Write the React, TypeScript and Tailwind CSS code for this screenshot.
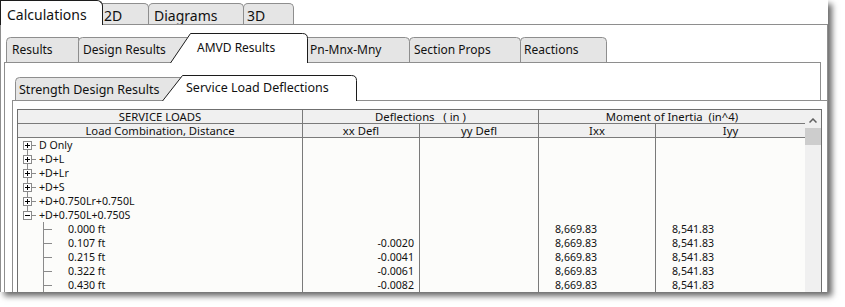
import React from "react";

// Forme d'onglet dessinée en SVG (fond + contour)
function TabShape({ d, active }: { d: string; active?: boolean }) {
  return (
    <svg className="absolute inset-0 overflow-visible" width="100%" height="100%">
      <path
        d={d}
        fill={active ? "#ffffff" : "#e5e5e5"}
        stroke={active ? "#1c1c1c" : "#8e8e8e"}
        strokeWidth="1"
      />
    </svg>
  );
}

// Noeud parent de l'arbre (+ / -)
function ParentNode({ first, last, open }: { first?: boolean; last?: boolean; open?: boolean }) {
  return (
    <svg width="21" height="14" className="shrink-0">
      <line x1="9.5" y1={first ? 7 : 0} x2="9.5" y2={last ? 7 : 14} stroke="#8a8a8a" />
      <line x1="14" y1="7.5" x2="18" y2="7.5" stroke="#8a8a8a" />
      <rect x="5.5" y="3.5" width="8" height="8" fill="#ffffff" stroke="#8a8a8a" />
      <line x1="7" y1="7.5" x2="12" y2="7.5" stroke="#000000" />
      {!open && <line x1="9.5" y1="5" x2="9.5" y2="10" stroke="#000000" />}
    </svg>
  );
}

function ChildNode() {
  return (
    <svg width="50" height="14" className="shrink-0">
      <line x1="25.5" y1="0" x2="25.5" y2="14" stroke="#8a8a8a" />
      <line x1="26" y1="7.5" x2="34" y2="7.5" stroke="#8a8a8a" />
    </svg>
  );
}

const parents = ["D Only", "+D+L", "+D+Lr", "+D+S", "+D+0.750Lr+0.750L", "+D+0.750L+0.750S"];

const stations = [
  { dist: "0.000 ft", xx: "", ixx: "8,669.83", iyy: "8,541.83" },
  { dist: "0.107 ft", xx: "-0.0020", ixx: "8,669.83", iyy: "8,541.83" },
  { dist: "0.215 ft", xx: "-0.0041", ixx: "8,669.83", iyy: "8,541.83" },
  { dist: "0.322 ft", xx: "-0.0061", ixx: "8,669.83", iyy: "8,541.83" },
  { dist: "0.430 ft", xx: "-0.0082", ixx: "8,669.83", iyy: "8,541.83" },
];

function Row({ label, xx = "", ixx = "", iyy = "" }: { label: React.ReactNode; xx?: string; ixx?: string; iyy?: string }) {
  return (
    <div className="flex h-[14px] leading-[14px] text-[10.6px]">
      <div className="w-[285px] border-r border-[#7a7a7a] flex items-center">{label}</div>
      <div className="w-[117px] border-r border-[#7a7a7a] text-right pr-[5px]">{xx}</div>
      <div className="w-[119px] border-r border-[#7a7a7a]" />
      <div className="w-[117px] border-r border-[#7a7a7a] pl-[16px]">{ixx}</div>
      <div className="w-[149px] pl-[16px]">{iyy}</div>
    </div>
  );
}

export default function App() {
  return (
    <div className="w-[845px] h-[307px] bg-white overflow-hidden font-['Noto_Sans','Open_Sans',sans-serif] text-[#111111]">
      <div className="flex flex-col w-[828px] h-[292px] bg-white overflow-hidden shadow-[4px_4px_6px_rgba(0,0,0,0.6)]">
        {/* Onglets niveau 1 */}
        <div className="flex items-end h-[24px] text-[14px] shrink-0">
          <div className="relative z-10 -mb-px h-[25px] w-[103px] bg-white border border-b-0 border-[#1c1c1c] rounded-tr-[6px] pl-[6px] leading-[27px]">
            Calculations
          </div>
          <div className="-ml-px h-[21px] w-[47px] bg-[#e5e5e5] border border-b-0 border-[#8e8e8e] rounded-tr-[5px] pl-[1px] leading-[24px]">
            2D
          </div>
          <div className="-ml-px h-[21px] w-[96px] bg-[#e5e5e5] border border-b-0 border-[#8e8e8e] rounded-t-[5px] pl-[5px] leading-[24px]">
            Diagrams
          </div>
          <div className="-ml-px h-[21px] w-[51px] bg-[#e5e5e5] border border-b-0 border-[#8e8e8e] rounded-t-[5px] pl-[3px] leading-[24px]">
            3D
          </div>
        </div>

        {/* Panneau niveau 1 */}
        <div className="flex-1 flex flex-col border-t border-l border-r border-[#8e8e8e] pt-[8px] pl-[3px] pr-[6px]">
          {/* Onglets niveau 2 */}
          <div className="flex items-end h-[29px] pl-[2px] text-[12px] shrink-0">
            <div className="relative w-[73px] h-[25px] flex items-center pl-[6px]">
              <TabShape d="M0.5 25V4.5Q0.5 0.5 4.5 0.5H72.5V25" />
              <span className="relative">Results</span>
            </div>
            <div className="relative -ml-px w-[114px] h-[25px] flex items-center pl-[5px]">
              <TabShape d="M0.5 25V4.5Q0.5 0.5 4.5 0.5H109.5Q113.5 0.5 113.5 4.5V25" />
              <span className="relative">Design Results</span>
            </div>
            <div className="relative z-20 -mb-px -ml-[22px] w-[138px] h-[30px] flex items-center pl-[27px] pb-[1px]">
              <TabShape active d="M0.5 30L20.5 0.5H132.5Q137.5 0.5 137.5 5.5V30" />
              <span className="relative">AMVD Results</span>
            </div>
            <div className="relative z-10 -ml-px w-[103px] h-[25px] flex items-center pl-[3px]">
              <TabShape d="M0.5 25V0.5H98.5Q102.5 0.5 102.5 4.5V25" />
              <span className="relative">Pn-Mnx-Mny</span>
            </div>
            <div className="relative -ml-px w-[112px] h-[25px] flex items-center pl-[5px]">
              <TabShape d="M0.5 25V4.5Q0.5 0.5 4.5 0.5H107.5Q111.5 0.5 111.5 4.5V25" />
              <span className="relative">Section Props</span>
            </div>
            <div className="relative -ml-px w-[87px] h-[25px] flex items-center pl-[4px]">
              <TabShape d="M0.5 25V4.5Q0.5 0.5 4.5 0.5H82.5Q86.5 0.5 86.5 4.5V25" />
              <span className="relative">Reactions</span>
            </div>
          </div>

          {/* Panneau niveau 2 */}
          <div className="flex-1 flex flex-col border-t border-l border-r border-[#8e8e8e] pl-[7px] pt-[12px]">
            <div className="relative z-10 flex-1 flex flex-col -mr-[7px]">
              {/* Onglets niveau 3 */}
              <div className="flex items-end h-[25px] pl-[3px] text-[12.5px] shrink-0">
                <div className="relative w-[172px] h-[23px] flex items-center pl-[4px] pt-[3px]">
                  <TabShape d="M0.5 23V4.5Q0.5 0.5 4.5 0.5H167.5Q171.5 0.5 171.5 4.5V23" />
                  <span className="relative">Strength Design Results</span>
                </div>
                <div className="relative z-20 -mb-px -ml-[25px] w-[195px] h-[26px] flex items-center pl-[24px]">
                  <TabShape active d="M0.5 26L20.5 0.5H189.5Q194.5 0.5 194.5 5.5V26" />
                  <span className="relative">Service Load Deflections</span>
                </div>
              </div>

              {/* Panneau niveau 3 */}
              <div className="flex-1 bg-white border-t border-l border-[#8e8e8e] pt-[8px] pl-[4px]">
                {/* Grille */}
                <div className="flex w-[805px] border border-[#6f6f6f] bg-[#fcfcfa]">
                  <div className="w-[787px] flex flex-col">
                    <div className="flex h-[14px] bg-[#f0f0f0] text-[11.3px] leading-[13px] text-center">
                      <div className="w-[285px] border-r border-b border-[#7a7a7a]">SERVICE LOADS</div>
                      <div className="w-[236px] border-r border-b border-[#7a7a7a] whitespace-pre">Deflections   ( in )</div>
                      <div className="w-[266px] border-b border-[#7a7a7a] whitespace-pre">Moment of Inertia  (in^4)</div>
                    </div>
                    <div className="flex h-[14px] bg-[#f0f0f0] text-[11.3px] leading-[13px] text-center">
                      <div className="w-[285px] border-r border-b border-[#7a7a7a]">Load Combination, Distance</div>
                      <div className="w-[117px] border-r border-b border-[#7a7a7a]">xx Defl</div>
                      <div className="w-[119px] border-r border-b border-[#7a7a7a]">yy Defl</div>
                      <div className="w-[117px] border-r border-b border-[#7a7a7a]">Ixx</div>
                      <div className="w-[149px] border-b border-[#7a7a7a]">Iyy</div>
                    </div>

                    {parents.map((p, i) => (
                      <Row
                        key={p}
                        label={
                          <>
                            <ParentNode first={i === 0} last={i === parents.length - 1} open={i === parents.length - 1} />
                            <span>{p}</span>
                          </>
                        }
                      />
                    ))}
                    {stations.map((s) => (
                      <Row
                        key={s.dist}
                        xx={s.xx}
                        ixx={s.ixx}
                        iyy={s.iyy}
                        label={
                          <>
                            <ChildNode />
                            <span>{s.dist}</span>
                          </>
                        }
                      />
                    ))}
                  </div>

                  {/* Barre de défilement */}
                  <div className="w-[16px] flex flex-col bg-[#f0f0f0]">
                    <div className="h-[18px] flex items-center justify-center pt-[2px]">
                      <svg width="8" height="5">
                        <path d="M0.5 4.5L4 1L7.5 4.5" fill="none" stroke="#606060" strokeWidth="1.5" />
                      </svg>
                    </div>
                    <div className="h-[17px] bg-[#cdcdcd]" />
                  </div>
                </div>
              </div>
            </div>
          </div>
        </div>
      </div>
    </div>
  );
}
